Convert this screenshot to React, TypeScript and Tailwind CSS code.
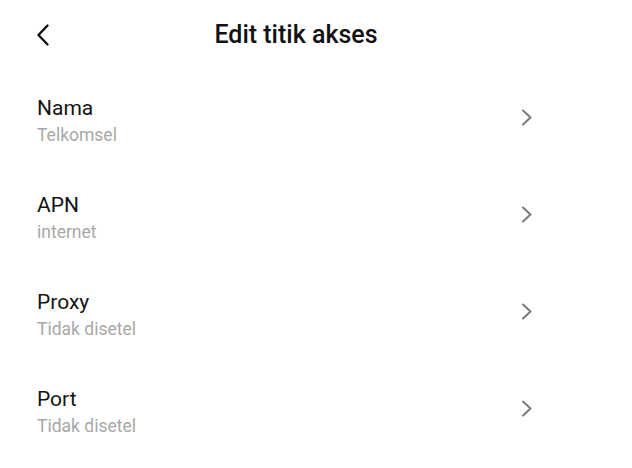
const items = [
  { label: "Nama", value: "Telkomsel" },
  { label: "APN", value: "internet" },
  { label: "Proxy", value: "Tidak disetel" },
  { label: "Port", value: "Tidak disetel" },
];

const BackIcon = () => (
  <svg width="14" height="24" viewBox="0 0 14 24" fill="none">
    <path
      d="M11.5 2.5 L2.5 12 L11.5 21.5"
      stroke="#111111"
      strokeWidth="2.4"
      strokeLinecap="round"
      strokeLinejoin="round"
    />
  </svg>
);

const ChevronIcon = () => (
  <svg width="12" height="17" viewBox="0 0 12 17" fill="none">
    <path
      d="M2 1.5 L9.5 8.5 L2 15.5"
      stroke="#7a7a7a"
      strokeWidth="2"
      strokeLinecap="round"
      strokeLinejoin="round"
    />
  </svg>
);

const Row = ({ label, value }: { label: string; value: string }) => (
  <button className="flex h-[97px] w-full items-center pl-[37px] pr-[99px] text-left">
    <div className="flex flex-1 flex-col gap-px">
      <span className="text-[21px] leading-[28px] text-[#141414]">{label}</span>
      <span className="text-[17.5px] leading-[24px] text-[#a8a8a8]">{value}</span>
    </div>
    <div className="mb-[6px]">
      <ChevronIcon />
    </div>
  </button>
);

export default function App() {
  return (
    <div className="h-[468px] w-[632px] overflow-hidden bg-white font-['Roboto',sans-serif]">
      <header className="flex h-[72px] items-center pl-[36px] pr-[90px] pb-[2px]">
        <button className="flex h-[24px] w-[14px] items-center">
          <BackIcon />
        </button>
        <h1 className="flex-1 text-center text-[25px] font-medium leading-[32px] text-[#111111]">
          Edit titik akses
        </h1>
      </header>
      <div className="flex flex-col">
        {items.map((it) => (
          <Row key={it.label} label={it.label} value={it.value} />
        ))}
      </div>
    </div>
  );
}
